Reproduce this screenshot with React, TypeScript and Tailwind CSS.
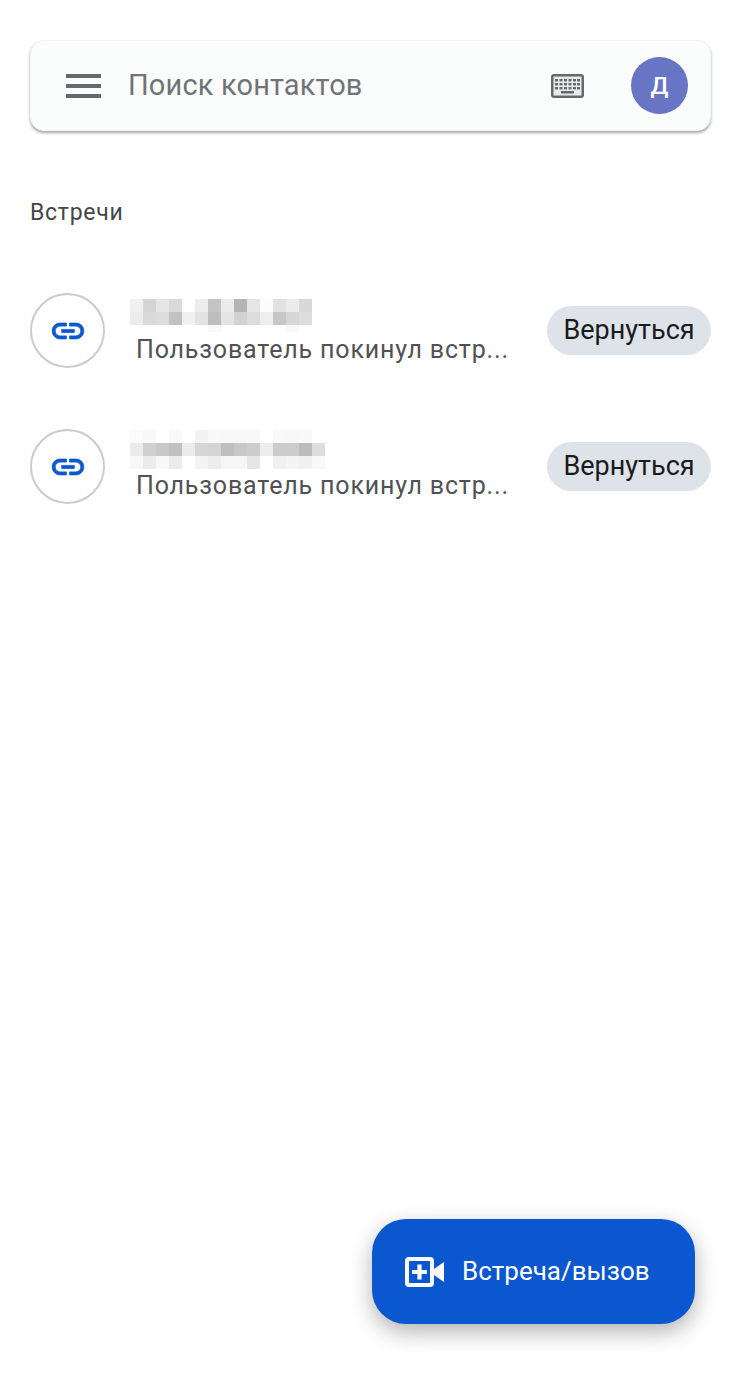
// pixelated (censored) contact names, one colour per mosaic cell
const firstName = [
  ["#f0f0f0", "#d4d4d4", "#e6e6e6", "#dadada", "#ffffff", "#ededed", "#c4c4c4", "#ebebeb", "#b4b4b4", "#e6e6e6", "#fcfcfc", "#e2e2e2", "#ebebeb", "#d8d8d8"],
  ["#ececec", "#dadada", "#dcdcdc", "#c2c2c2", "#f0f0f0", "#e2e2e2", "#bdbdbd", "#e4e4e4", "#d2d2d2", "#dcdcdc", "#eeeeee", "#c6c6c6", "#d6d6d6", "#dcdcdc"],
  ["#ffffff", "#ffffff", "#ffffff", "#ffffff", "#ffffff", "#ffffff", "#f9f9f9", "#ffffff", "#ffffff", "#ffffff", "#ffffff", "#ffffff", "#f8f8f8", "#ffffff"],
];

const secondName = [
  ["#fbfbfb", "#f8f8f8", "#ffffff", "#f9f9f9", "#ffffff", "#f2f2f2", "#f9f9f9", "#f8f8f8", "#f8f8f8", "#f8f8f8", "#ffffff", "#f9f9f9", "#f8f8f8", "#f9f9f9", "#ffffff"],
  ["#ebebeb", "#cfcfcf", "#c8c8c8", "#c0c0c0", "#ebebeb", "#d6d6d6", "#d4d4d4", "#bfbfbf", "#c8c8c8", "#cccccc", "#ededed", "#cccccc", "#cccccc", "#bcbcbc", "#dddddd"],
  ["#f8f8f8", "#ececec", "#f8f8f8", "#ececec", "#ffffff", "#f4f4f4", "#ededed", "#f6f6f6", "#f6f6f6", "#e6e6e6", "#ffffff", "#f0f0f0", "#f4f4f4", "#f0f0f0", "#f8f8f8"],
];

const Mosaic = ({ cells, className }: { cells: string[][]; className: string }) => (
  <div className={`flex flex-col overflow-hidden ${className}`}>
    {cells.map((row, i) => (
      <div key={i} className="flex h-[13px] shrink-0">
        {row.map((c, j) => (
          <div key={j} className="w-[13px] h-full" style={{ backgroundColor: c }} />
        ))}
      </div>
    ))}
  </div>
);

const MeetingRow = ({ cells, mosaicClass }: { cells: string[][]; mosaicClass: string }) => (
  <div className="flex items-center h-[75px]">
    <div className="w-[75px] h-[75px] rounded-full border-2 border-[#cbcbcb] flex items-center justify-center shrink-0">
      <svg width="38" height="38" viewBox="0 0 24 24" className="fill-[#0b57d0] stroke-[#0b57d0] stroke-[0.5]">
        <path d="M3.9 12c0-1.71 1.39-3.1 3.1-3.1h4V7H7c-2.76 0-5 2.24-5 5s2.24 5 5 5h4v-1.9H7c-1.71 0-3.1-1.39-3.1-3.1zM8 13h8v-2H8v2zm9-6h-4v1.9h4c1.71 0 3.1 1.39 3.1 3.1s-1.39 3.1-3.1 3.1h-4V17h4c2.76 0 5-2.24 5-5s-2.24-5-5-5z" />
      </svg>
    </div>
    <div className="ml-[25px] flex flex-col self-stretch w-[391px]">
      <div className="h-[41px]">
        <Mosaic cells={cells} className={mosaicClass} />
      </div>
      <p className="ml-[6px] text-[25px] leading-[32px] text-[#4f5154] whitespace-nowrap tracking-[0.84px]">Пользователь покинул встр...</p>
    </div>
    <button className="ml-auto w-[164px] h-[49px] rounded-full bg-[#dee3ea] text-[27px] font-normal text-[#1a1a1a] flex items-center justify-center">
      Вернуться
    </button>
  </div>
);

export default function App() {
  return (
    <div className="w-[740px] h-[1381px] bg-white relative overflow-hidden font-['Roboto',sans-serif]">
      <div className="pt-[40px] pl-[30px] pr-[29px]">
        {/* search bar */}
        <div className="h-[91px] rounded-[14px] bg-[#fbfdfc] border border-[#f3f3f3] shadow-[0_2px_3px_rgba(0,0,0,0.35)] flex items-center pl-[35px] pr-[22px]">
          <svg width="36" height="24" viewBox="0 0 36 24" className="shrink-0 fill-[#66686b]">
            <rect x="0" y="0" width="35" height="4" />
            <rect x="0" y="10" width="35" height="4" />
            <rect x="0" y="20" width="35" height="4" />
          </svg>
          <span className="ml-[26px] text-[29px] tracking-[0.15px] text-[#707377]">Поиск контактов</span>
          <svg width="33" height="24" viewBox="0 0 33 24" className="ml-auto shrink-0">
            <rect x="0" y="0" width="33" height="24" rx="3" fill="#66686b" />
            <rect x="2.5" y="2.5" width="28" height="19" fill="#e9e9e9" />
            <g fill="#66686b">
              <rect x="4" y="5" width="3" height="2.4" /><rect x="8.5" y="5" width="3" height="2.4" /><rect x="13" y="5" width="3" height="2.4" /><rect x="17.5" y="5" width="3" height="2.4" /><rect x="22" y="5" width="3" height="2.4" /><rect x="26" y="5" width="3" height="2.4" />
              <rect x="4" y="9" width="3" height="2.4" /><rect x="8.5" y="9" width="3" height="2.4" /><rect x="13" y="9" width="3" height="2.4" /><rect x="17.5" y="9" width="3" height="2.4" /><rect x="22" y="9" width="3" height="2.4" /><rect x="26" y="9" width="3" height="2.4" />
              <rect x="4" y="13" width="3" height="2.4" /><rect x="8.5" y="13" width="3" height="2.4" /><rect x="13" y="13" width="3" height="2.4" /><rect x="17.5" y="13" width="3" height="2.4" /><rect x="22" y="13" width="3" height="2.4" /><rect x="26" y="13" width="3" height="2.4" />
              <rect x="10" y="17" width="13" height="2.5" />
            </g>
          </svg>
          <div className="ml-[47px] w-[57px] h-[57px] rounded-full bg-[#6875c4] flex items-center justify-center text-white text-[24px] font-medium shrink-0">
            Д
          </div>
        </div>

        <h2 className="mt-[68px] text-[23px] leading-[28px] text-[#444648] tracking-[0.75px]">Встречи</h2>

        <div className="mt-[66px] flex flex-col gap-[61px]">
          <MeetingRow cells={firstName} mosaicClass="mt-[6px] h-[33px]" />
          <MeetingRow cells={secondName} mosaicClass="mt-[1px] h-[39px]" />
        </div>
      </div>

      {/* floating action button */}
      <button className="absolute left-[372px] top-[1219px] w-[323px] h-[105px] rounded-[34px] bg-[#0b57d0] shadow-[0_8px_22px_rgba(0,0,0,0.3)] flex items-center pl-[33px] text-white">
        <svg width="39" height="30" viewBox="0 0 39 30" className="shrink-0" fill="none">
          <rect x="2" y="2" width="25" height="26" rx="2" stroke="white" strokeWidth="4" />
          <path d="M14.5 7.5v15M7 15h15" stroke="white" strokeWidth="4.2" />
          <path d="M29 12l10-7v20l-10-7z" fill="white" />
        </svg>
        <span className="ml-[18px] text-[26px]">Встреча/вызов</span>
      </button>
    </div>
  );
}
